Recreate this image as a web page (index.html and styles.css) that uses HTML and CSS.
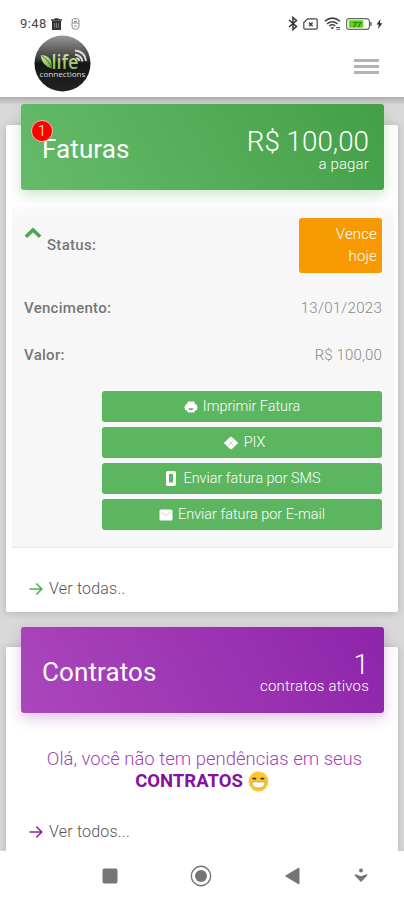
FILE: index.html
```html
<!DOCTYPE html>
<html lang="pt-BR">
<head>
<meta charset="utf-8">
<title>Life Connections</title>
<link rel="stylesheet" href="styles.css">
</head>
<body>
<div class="screen">
  <header class="top">
    <div class="status">
      <div class="status-left">
        <span class="clock">9:48</span>
        <svg width="11" height="12" viewBox="0 0 11 12"><path d="M0 2h11M3.5 1h4" stroke="#333" stroke-width="1.6"/><path d="M1 3h9v9H1z" fill="#333"/><path d="M3.7 5v5M5.5 5v5M7.3 5v5" stroke="#999" stroke-width=".7"/></svg>
        <svg class="mouse" width="9" height="12" viewBox="0 0 9 12" fill="none" stroke="#888"><path d="M1.2 4.5V2L2.5.7h4L8 2v2.500M1 5h7v3.500a3.500 2.800 0 0 1-7 0zM3 3.500h3M3 8h3"/></svg>
      </div>
      <div class="status-right">
        <svg width="10" height="15" viewBox="0 0 10 15" fill="none" stroke="#333" stroke-width="1.500"><path d="M1 4l7.500 6.500L5 13.500v-12l3.500 3L1 11"/></svg>
        <svg width="15" height="12" viewBox="0 0 15 12" fill="none" stroke="#444" stroke-width="1.200"><path d="M4.500.8H13a1.200 1.200 0 0 1 1.200 1.200v8a1.200 1.200 0 0 1-1.200 1.200H2A1.200 1.200 0 0 1 .8 10V4.500z"/><path d="M6 4.500l3.600 3.600M9.600 4.500L6 8.100" stroke-width="1.500"/></svg>
        <svg width="17" height="13" viewBox="0 0 17 13" fill="none" stroke="#444" stroke-width="1.500"><path d="M.8 4.200q7.500-6.200 15 0M3 6.800q5.300-4.200 10.500 0M5.300 9q3-2.400 6 0"/><path d="M6.300 10.300h4L8.300 12.500z" fill="#444" stroke="none"/><path d="M12 10.500h4M12.500 12.300h3.500" stroke-width=".9"/></svg>
        <svg width="26" height="12" viewBox="0 0 26 12"><rect x=".6" y=".6" width="22.800" height="10.800" rx="3" fill="#fff" stroke="#666" stroke-width="1.100"/><rect x="2.800" y="2.200" width="14.500" height="7.600" rx="1.200" fill="#5fd312"/><path d="M24.800 4v4" stroke="#666" stroke-width="1.500"/><text x="6.500" y="9" class="battery">77</text></svg>
        <svg width="7" height="10" viewBox="0 0 7 10"><path d="M4.500 0L.5 5.600h2.300L2 10l4.500-5.800H4z" fill="#333"/></svg>
      </div>
    </div>
    <div class="brandbar">
      <svg class="logo" width="57" height="57" viewBox="0 0 57 57">
        <defs>
          <linearGradient id="ball" x1="0" y1="0" x2="0" y2="1"><stop offset="0" stop-color="#999"/><stop offset=".42" stop-color="#3b3b3b"/><stop offset=".5" stop-color="#151515"/><stop offset="1" stop-color="#222"/></linearGradient>
          <linearGradient id="leaf" x1="0" y1="0" x2="1" y2="1"><stop offset="0" stop-color="#dceeb0"/><stop offset="1" stop-color="#63a52d"/></linearGradient>
          <linearGradient id="word" x1="0" y1="0" x2="0" y2="1"><stop offset="0" stop-color="#e1edc2"/><stop offset="1" stop-color="#78b52f"/></linearGradient>
        </defs>
        <circle cx="28.500" cy="28.500" r="28" fill="url(#ball)"/>
        <path d="M6.500 20q10 0 11 8l.5 5.500Q8 31 6.500 20z" fill="url(#leaf)"/>
        <path d="M6.500 20q8 5 11.500 13.500" fill="none" stroke="#345918" stroke-width=".8"/>
        <text x="17.500" y="33.500" class="logo-name" textLength="27" lengthAdjust="spacingAndGlyphs" fill="url(#word)">life</text>
        <path d="M41 19.500q6.500 1 7.500 7M41 15.500q10 1 11 10.500M42.500 23q2.500.5 3 3" fill="none" stroke="#ddd" stroke-width="1.900"/>
        <text x="5.500" y="42" class="logo-sub" textLength="46" lengthAdjust="spacingAndGlyphs">connections</text>
      </svg>
      <div class="menu"><i></i><i></i><i></i></div>
    </div>
  </header>

  <main class="content">
    <section class="card card-bills">
      <div class="banner green">
        <span class="badge">1</span>
        <h2>Faturas</h2>
        <div class="summary"><span class="big">R$ 100,00</span><span class="small">a pagar</span></div>
      </div>
      <div class="panel">
        <div class="row row-status">
          <div class="label-wrap">
            <svg width="18" height="12" viewBox="0 0 16 11"><path d="M1.500 9L8 2.700 14.500 9" fill="none" stroke="#4ca650" stroke-width="3.200"/></svg>
            <b>Status:</b>
          </div>
          <span class="tag">Vence<br>hoje</span>
        </div>
        <div class="row row-due"><b>Vencimento:</b><span class="due">13/01/2023</span></div>
        <div class="row row-value"><b>Valor:</b><span class="amount">R$ 100,00</span></div>
        <div class="actions">
          <div class="btn"><svg width="14" height="14" viewBox="0 0 14 14"><path d="M4 1.500h6l1 2.200q2.500 1 2.500 3.700 0 2.600-2.300 3.100L10 12.500H4l-1.200-2Q.5 10 .5 7.400.5 4.700 3 3.700z" fill="#fff"/><path d="M4.300 8.200h5.400L8.500 10h-3z" fill="#5cb660"/></svg><span>Imprimir Fatura</span></div>
          <div class="btn btn-pix"><svg width="14" height="14" viewBox="0 0 14 14"><path d="M7 1.200L9.800 3.800 13.200 7 9.800 10.200 7 12.800 4.200 10.200.8 7 4.200 3.800z" fill="#fff" stroke="#fff" stroke-width="1.500" stroke-linejoin="round"/><path d="M4.500 4.700l5 4.600M9.500 4.700l-5 4.600" stroke="#a9d9ab" stroke-width=".8"/></svg><span>PIX</span></div>
          <div class="btn btn-sms"><svg width="10" height="15" viewBox="0 0 10 15"><rect width="10" height="15" rx="2" fill="#fff"/><path d="M3 3h4v8.500H3z" fill="#5cb660"/></svg><span>Enviar fatura por SMS</span></div>
          <div class="btn"><svg width="14" height="12" viewBox="0 0 14 12"><rect x=".5" y=".5" width="13" height="11" rx="1.500" fill="#fff"/><path d="M2 3l5 3.500L12 3" fill="none" stroke="#b9dfba" stroke-width=".9"/></svg><span>Enviar fatura por E-mail</span></div>
        </div>
      </div>
      <div class="more"><svg width="14" height="14" viewBox="0 0 14 14" fill="none" stroke="#4caf50" stroke-width="1.600"><path d="M.5 7h12M7.300 1.500L12.800 7l-5.500 5.500"/></svg><span>Ver todas..</span></div>
    </section>

    <section class="card card-contracts">
      <div class="banner purple">
        <h2>Contratos</h2>
        <div class="summary"><span class="big">1</span><span class="small wide">contratos ativos</span></div>
      </div>
      <p class="message"><span class="hello">Olá, você não tem pendências em seus</span><span class="line2"><b>CONTRATOS</b>
        <svg width="21" height="21" viewBox="0 0 21 21"><circle cx="10.500" cy="10.500" r="10" fill="#fcc62f"/><path d="M4.500 8q1.700-1.300 3.600 0M12.600 8q1.700-1.300 3.600 0" fill="none" stroke="#503718" stroke-width="1.700"/><path d="M4 11h13q0 6-6.500 6T4 11z" fill="#fff" stroke="#a17822" stroke-width=".5"/></svg></span></p>
      <div class="more"><svg width="14" height="14" viewBox="0 0 14 14" fill="none" stroke="#9027a7" stroke-width="1.600"><path d="M.5 7h12M7.300 1.500L12.800 7l-5.500 5.500"/></svg><span>Ver todos...</span></div>
    </section>
  </main>

  <nav class="nav">
    <svg width="16" height="16" viewBox="0 0 16 16"><rect x=".5" y=".5" width="15" height="15" rx="2" fill="#757575"/></svg>
    <svg width="22" height="22" viewBox="0 0 22 22"><circle cx="11" cy="11" r="9.700" fill="none" stroke="#757575" stroke-width="1.400"/><circle cx="11" cy="11" r="6" fill="#757575"/></svg>
    <svg width="15" height="18" viewBox="0 0 15 18"><path d="M.5 9L14 1v16z" fill="#757575" stroke="#757575" stroke-linejoin="round"/></svg>
    <svg width="14" height="15" viewBox="0 0 14 15"><circle cx="7" cy="2.500" r="2" fill="#757575"/><path d="M.8 6L7 8.300 13.200 6q.2 1.500-1 2.700L7 14 1.800 8.700Q.6 7.500.8 6z" fill="#757575"/></svg>
  </nav>
</div>
</body>
</html>
```
FILE: styles.css
```css
* { box-sizing: border-box; }
body { margin: 0; font-family: Roboto, "Liberation Sans", sans-serif; font-weight: 300; color: #555; }
svg { display: block; flex: none; }
.screen { width: 404px; height: 900px; display: flex; flex-direction: column; overflow: hidden; background: #d9d9d9; }

.top { flex: none; height: 97px; background: #fff; padding-top: 16px; }
.status { height: 15px; display: flex; justify-content: space-between; padding: 0 21px 0 20px; }
.status-left, .status-right { display: flex; align-items: center; }
.clock { font: 400 13px/15px Roboto, sans-serif; color: #444; width: 27px; margin-right: 4px; letter-spacing: .45px; }
.mouse { margin-left: 9px; }
.status-right { gap: 5px; }
.status-right svg:nth-child(3) { margin-left: 1px; }
.status-right svg:nth-child(5) { margin-left: -1px; }
.battery { font: 700 8px Roboto, sans-serif; fill: #28760a; }
.brandbar { height: 66px; display: flex; justify-content: space-between; padding: 4px 25px 0 34px; }
.logo-name { font: 600 20px "Open Sans", sans-serif; }
.logo-sub { font: 400 8px "Open Sans", sans-serif; fill: #ddd; }
.menu { width: 25px; padding-top: 24px; display: flex; flex-direction: column; gap: 3px; }
.menu i { height: 3px; background: #b3b3b3; }

.content { flex: none; height: 754px; overflow: hidden; padding: 28px 6px 0; background: linear-gradient(rgba(0,0,0,.2), transparent 8px), #d9d9d9; }
.card { background: #fff; border-radius: 2px; box-shadow: 0 1px 8px rgba(0,0,0,.18); display: flow-root; }
.card-bills { height: 487px; }
.card-contracts { height: 240px; margin-top: 35px; }
.banner { position: relative; height: 86px; margin: -21px 14px 0 15px; border-radius: 3px; padding: 21px 15px 0 21px; display: flex; justify-content: space-between; color: #fff; }
.card-contracts .banner { margin-top: -20px; }
.green { background: linear-gradient(60deg, #66bb6a, #43a047); box-shadow: 0 5px 14px rgba(60,150,65,.25); }
.purple { background: linear-gradient(60deg, #ab47bc, #8e24aa); box-shadow: 0 5px 14px rgba(142,36,170,.28); }
.banner h2 { margin: 9px 0 0; font: 400 26px/31px Roboto, sans-serif; letter-spacing: .1px; }
.badge { position: absolute; left: 10px; top: 16px; width: 22px; height: 22px; border: 1px solid #f5b6a3; border-radius: 50%; background: #f00; text-align: center; font-size: 15px; line-height: 20px; }
.summary { display: flex; flex-direction: column; align-items: flex-end; }
.big { font-size: 27.800px; line-height: 33px; }
.small { font-size: 15px; line-height: 17px; margin-top: -2px; letter-spacing: .15px; }
.card-contracts .small { margin-top: -3px; }
.wide { letter-spacing: .2px; }

.panel { height: 341px; margin: 17px 4px 0 6px; padding: 11px 12px 0 12px; background: linear-gradient(#fbfbfb, #f7f7f7 14px); border-bottom: 1px solid #eaeaea; color: #888; font-size: 15px; }
.panel b { font-weight: 500; color: #777; letter-spacing: .28px; }
.row { display: flex; justify-content: space-between; line-height: 20px; }
.row-status { height: 55px; }
.label-wrap { display: flex; gap: 5px; padding-top: 9px; }
.label-wrap b { padding-top: 8px; }
.tag { width: 83px; height: 55px; padding: 5px 5px 0 0; border-radius: 3px; background: #f69903; color: #fff; line-height: 22px; text-align: right; letter-spacing: .15px; }
.row-due { margin-top: 25px; }
.due { letter-spacing: .28px; }
.amount { letter-spacing: .15px; }
.row-value { margin-top: 27px; }
.actions { margin: 26px 0 0 78px; display: flex; flex-direction: column; gap: 5px; }
.btn { height: 31px; display: flex; align-items: center; justify-content: center; gap: 5px; background: #5cb660; border-radius: 3px; color: #fff; font-size: 14.400px; }
.btn-pix { gap: 6px; padding-left: 5px; }
.btn-sms { gap: 7px; padding-left: 3px; }
.more { display: flex; align-items: center; gap: 6px; padding-left: 23px; height: 20px; margin-top: 31px; font-size: 16px; line-height: 20px; color: #555; letter-spacing: .2px; }

.message { margin: 35px 0 0; padding-left: 5px; text-align: center; color: #a344b6; font-size: 18.500px; line-height: 22px; }
.message b { font-size: 18.500px; font-weight: 700; color: #86109f; }
.hello { display: block; }
.line2 { display: flex; justify-content: center; align-items: center; gap: 5px; padding-right: 5px; height: 22px; }
.card-contracts .more { margin-top: 30px; }

.nav { position: relative; flex: none; height: 49px; background: #fff; display: flex; align-items: center; padding-left: 102px; }
.nav svg:nth-child(2) { margin-left: 72px; }
.nav svg:nth-child(3) { margin-left: 73px; }
.nav svg:nth-child(4) { margin-left: 54px; }
```
